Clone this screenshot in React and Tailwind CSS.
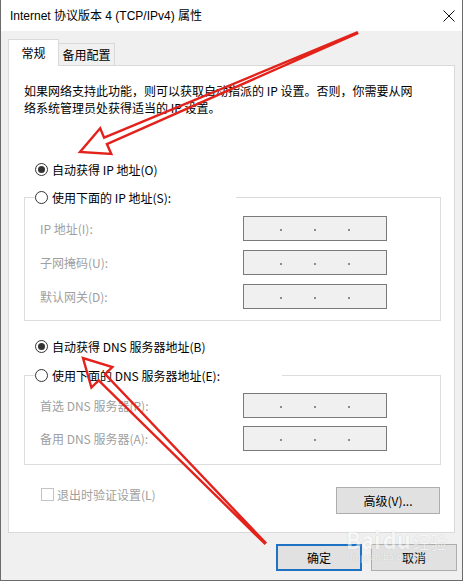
import React from 'react';

const font = { fontFamily: '"Noto Sans CJK SC", "Noto Sans", sans-serif' };
const titleFont = { fontFamily: '"Liberation Sans", "Noto Sans CJK SC", sans-serif' };

const Radio = ({ checked }) => (
  <span className="w-[13px] h-[13px] rounded-full border border-[#333333] bg-white flex items-center justify-center shrink-0">
    {checked && <span className="w-[7px] h-[7px] rounded-full bg-[#333333]" />}
  </span>
);

const IpBox = () => (
  <div className="w-[144px] h-[25px] border border-[#7a7a7a] bg-[#f0f0f0] flex items-center justify-center gap-[32px] pt-[3px]">
    <span className="w-[2px] h-[2px] bg-[#8c8c8c]" />
    <span className="w-[2px] h-[2px] bg-[#8c8c8c]" />
    <span className="w-[2px] h-[2px] bg-[#8c8c8c]" />
  </div>
);

const GroupBox = ({ label, labelWidth, rows, gap, pt, pb }) => (
  <div className="w-[417px]">
    <div className="flex h-[17px]">
      <div className="w-[11px] h-[9px] self-end border-t border-l border-[#dcdcdc]" />
      <div className="flex items-center gap-[4px] h-[17px]" style={{ width: labelWidth }}>
        <Radio />
        <span className="text-[12px] leading-[17px] text-black">{label}</span>
      </div>
      <div className="flex-1 h-[9px] self-end border-t border-r border-[#dcdcdc]" />
    </div>
    <div className={`border-x border-b border-[#dcdcdc] pl-[15px] flex flex-col ${gap} ${pt} ${pb}`}>
      {rows.map((r) => (
        <div key={r} className="flex items-center">
          <span className="w-[203px] text-[12px] text-[#a0a0a0]">{r}</span>
          <IpBox />
        </div>
      ))}
    </div>
  </div>
);

export default function App() {
  return (
    <div className="relative w-[465px] h-[581px] bg-white overflow-hidden text-black" style={font}>
      <div className="w-[463px] h-[581px] border-x border-b border-[#6b6b6b] bg-[#f0f0f0] flex flex-col">
        {/* title bar */}
        <div className="h-[31px] bg-white flex items-center justify-between pl-[9px] pr-[7px]">
          <span className="text-[12px]" style={titleFont}>Internet 协议版本 4 (TCP/IPv4) 属性</span>
          <svg width="12" height="12" viewBox="0 0 12 12">
            <path d="M0.5 0.5 L11.5 11.5 M11.5 0.5 L0.5 11.5" stroke="#111" strokeWidth="1" />
          </svg>
        </div>

        <div className="pl-[7px] pt-[7px]">
          {/* tabs */}
          <div className="flex items-end h-[27px]">
            <div className="relative z-10 -mb-px w-[51px] h-[27px] bg-white border-t border-x border-[#d9d9d9] flex justify-center pt-[4px] text-[12px]">
              常规
            </div>
            <div className="w-[56px] h-[22px] bg-[#f0f0f0] border-t border-r border-[#d9d9d9] flex justify-center items-center text-[12px]">
              备用配置
            </div>
          </div>

          {/* panel */}
          <div className="w-[447px] h-[468px] bg-white border border-[#d9d9d9] pl-[15px] pr-[13px] pt-[16px]">
            <div className="text-[12px] leading-[17px]">
              <div>如果网络支持此功能，则可以获取自动指派的 IP 设置。否则，你需要从网</div>
              <div>络系统管理员处获得适当的 IP 设置。</div>
            </div>

            <div className="mt-[45px] ml-[11px] h-[17px] flex items-center gap-[4px]">
              <Radio checked />
              <span className="text-[12px]">自动获得 IP 地址(O)</span>
            </div>

            <div className="mt-[11px]">
              <GroupBox
                label="使用下面的 IP 地址(S):"
                labelWidth={201}
                rows={['IP 地址(I):', '子网掩码(U):', '默认网关(D):']}
                gap="gap-[9px]"
                pt="pt-[10px]"
                pb="pb-[11px]"
              />
            </div>

            <div className="mt-[17px] ml-[11px] h-[17px] flex items-center gap-[4px]">
              <Radio checked />
              <span className="text-[12px]">自动获得 DNS 服务器地址(B)</span>
            </div>

            <div className="mt-[12px]">
              <GroupBox
                label="使用下面的 DNS 服务器地址(E):"
                labelWidth={247}
                rows={['首选 DNS 服务器(P):', '备用 DNS 服务器(A):']}
                gap="gap-[8px]"
                pt="pt-[9px]"
                pb="pb-[13px]"
              />
            </div>

            <div className="mt-[22px] w-[417px] flex items-start justify-between">
              <div className="ml-[17px] mt-[-1px] h-[17px] flex items-center gap-[3px]">
                <span className="w-[13px] h-[13px] border border-[#c4c4c4] bg-white" />
                <span className="text-[12px] text-[#a0a0a0]">退出时验证设置(L)</span>
              </div>
              <button className="mr-[1px] w-[104px] h-[27px] bg-[#e1e1e1] border border-[#adadad] text-[12px]">
                高级(V)...
              </button>
            </div>
          </div>

          {/* dialog buttons */}
          <div className="mt-[11px] flex justify-end gap-[9px] pr-[5px]">
            <button className="w-[86px] h-[27px] bg-[#e1e1e1] border-2 border-[#1d72c4] text-[12px]">确定</button>
            <button className="w-[86px] h-[27px] bg-[#e1e1e1] border border-[#adadad] text-[12px]">取消</button>
          </div>
        </div>
      </div>

      {/* watermark */}
      <div className="absolute left-[346px] top-[528px] pointer-events-none flex flex-col items-start opacity-50">
        <div className="flex items-end gap-[2px] leading-none">
          <span className="text-[22px] font-bold text-white [text-shadow:0_0_1px_#9a9a9a]">Bai</span>
          <span className="text-[22px] font-bold text-white [text-shadow:0_0_1px_#9a9a9a]">du</span>
          <span className="text-[17px] text-white [text-shadow:0_0_1px_#9a9a9a]">经验</span>
        </div>
        <span className="text-[9px] text-white [text-shadow:0_0_1px_#9a9a9a] ml-[4px]">jingyan.baidu.com</span>
      </div>

      {/* annotation arrows */}
      <svg className="absolute left-0 top-0 pointer-events-none" width="465" height="581" viewBox="0 0 465 581">
        <polygon
          points="357.2,33.4 106.9,144.1 111.3,154 80,152 100.2,128.3 104.1,137.6 356.8,32.6"
          fill="none"
          stroke="#e3221c"
          strokeWidth="2.4"
          strokeLinejoin="miter"
        />
        <polygon
          points="265.4,542.6 105.1,374.1 112.4,367 83,358 91.4,387.6 98.7,380.5 264.6,543.4"
          fill="none"
          stroke="#e3221c"
          strokeWidth="2.4"
          strokeLinejoin="miter"
        />
      </svg>
    </div>
  );
}
